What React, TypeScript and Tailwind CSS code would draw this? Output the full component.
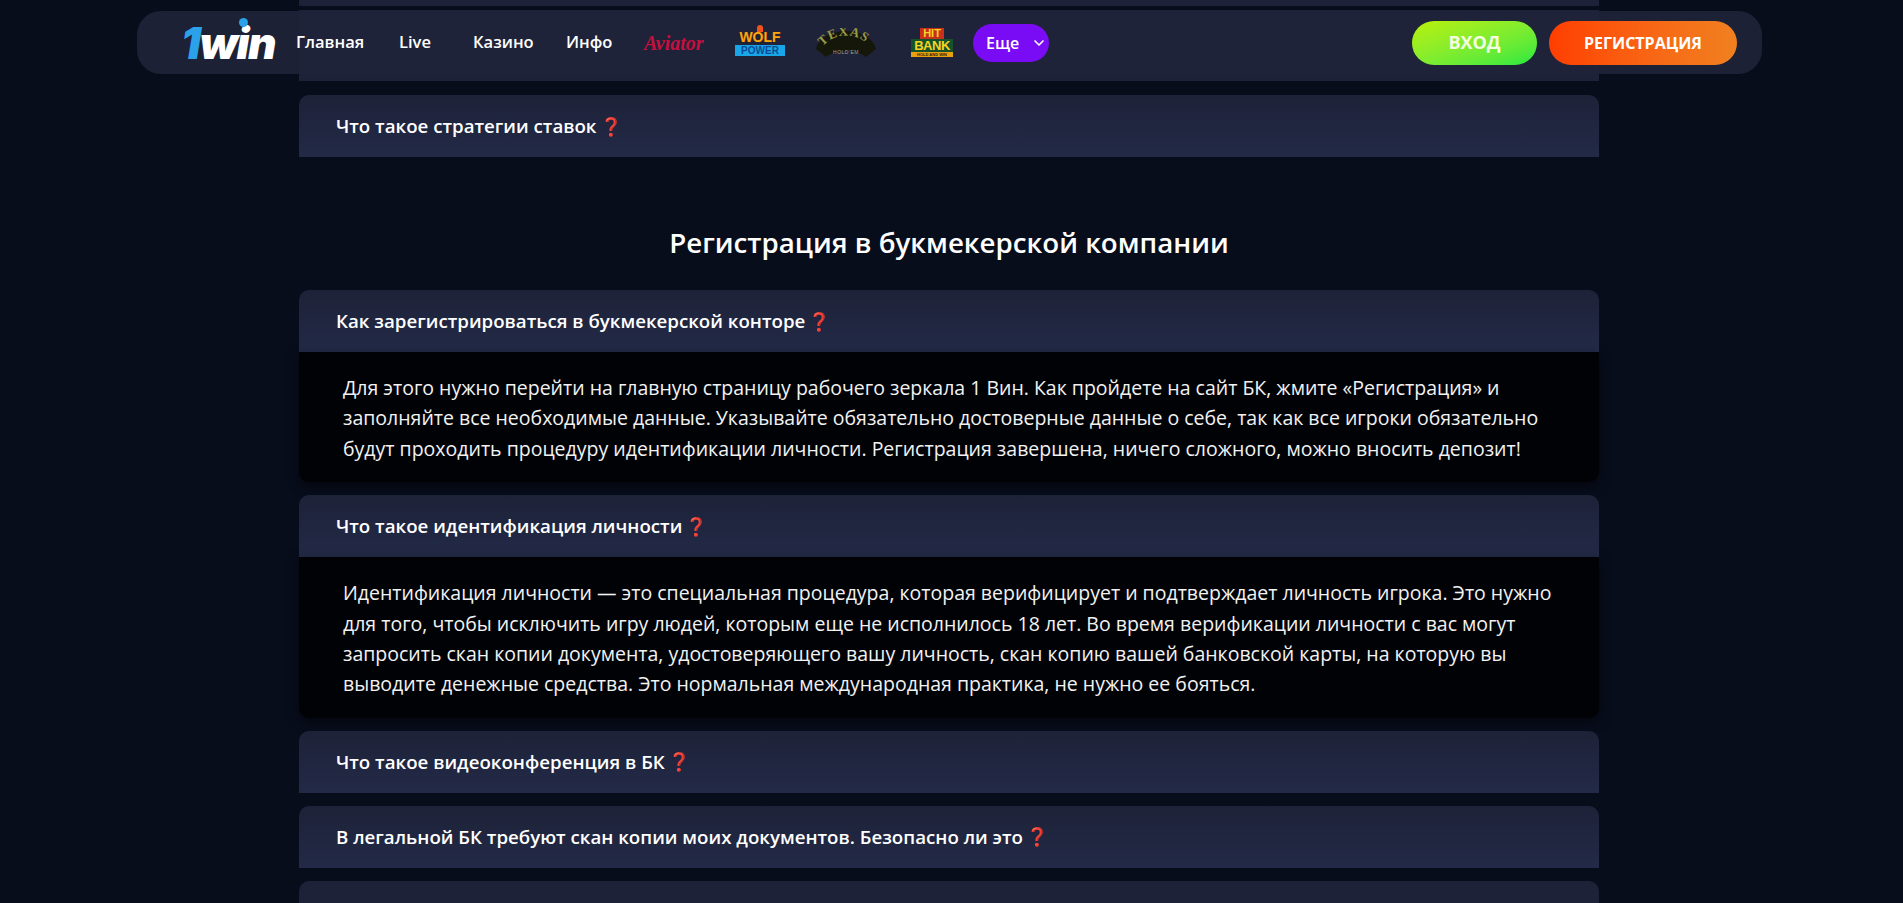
import React from 'react';
import { ChevronDown } from 'lucide-react';

const navLinks = [
  { label: 'Главная', className: 'w-[68px] mr-[35px]' },
  { label: 'Live', className: 'w-[36px] mr-[38px]' },
  { label: 'Казино', className: 'w-[60px] mr-[33px]' },
  { label: 'Инфо', className: 'w-[46px] mr-[32px]' },
];

function Question({ text }: { text: string }) {
  return (
    <div className="h-[62px] rounded-t-[10px] bg-gradient-to-b from-[#1d2238] to-[#232a47] pl-[37px] flex items-center text-[18.7px] font-semibold text-white">
      <span>{text}</span>
      <span className="ml-[3px] text-[#e8204a] text-[18px] font-bold">❓</span>
    </div>
  );
}

function Answer({ children }: { children: React.ReactNode }) {
  return (
    <div className="rounded-b-[10px] bg-[#010206] shadow-[0_4px_12px_rgba(0,0,0,0.55)] pl-[44px] pr-[40px] pt-[21px] pb-[18px] text-[19.5px] leading-[30.4px] text-[#f2f2f2]">
      {children}
    </div>
  );
}

function GameLogos() {
  return (
    <div className="flex items-center">
      <span className="w-[68px] mr-[23px] whitespace-nowrap text-[20px] leading-[24px] italic font-bold text-[#c4103e] font-['Liberation_Serif',serif]">Aviator</span>
      <div className="relative w-[50px] mr-[31px] flex flex-col items-center leading-none font-['Liberation_Sans',sans-serif] font-black">
        <span className="absolute top-[-5px] left-[22px] w-[6px] h-[7px] rounded-t-full bg-[#f0521a]" />
        <span className="text-[14px] text-[#f7a80f] [text-shadow:0_0_1px_#7a1d05]">WOLF</span>
        <span className="w-full h-[11px] mt-[1px] text-center text-[10px] leading-[11px] bg-[#19a6e8] text-[#0c4a96]">POWER</span>
      </div>
      <svg viewBox="0 0 60 30" className="w-[60px] h-[30px] mr-[35px]">
        <path d="M0 21C6 -3 54 -3 60 21L50 29C40 21 20 21 10 29Z" fill="#15170b" />
        <path id="texas-arc" d="M5 21C16 3 44 3 55 21" fill="none" />
        <text fontSize="13" fill="#9a9a42" fontFamily="Liberation Serif, serif" fontWeight="700" letterSpacing="1">
          <textPath href="#texas-arc" startOffset="3">TEXAS</textPath>
        </text>
        <text x="30" y="26" textAnchor="middle" fontSize="5" fill="#a0a08c" fontFamily="Liberation Sans, sans-serif" letterSpacing="0.5">HOLD'EM</text>
      </svg>
      <div className="w-[42px] mr-[22px] flex flex-col items-center leading-none font-['Liberation_Sans',sans-serif] font-black">
        <span className="h-[11px] px-[3px] text-[11px] leading-[11px] text-[#f7d323] bg-[#c9301c]">HIT</span>
        <span className="w-full h-[13px] text-center text-[13px] leading-[13px] tracking-[-0.5px] text-[#f7d323] bg-[#14532a]">BANK</span>
        <span className="w-full h-[5px] text-center text-[4px] leading-[5px] text-[#3a1c00] bg-[#e8a010]">HOLD AND WIN</span>
      </div>
    </div>
  );
}

function Header() {
  return (
    <header className="absolute top-[11px] left-[137px] w-[1625px] h-[63px] rounded-[24px] bg-[#20243a]/90 flex items-center pl-[44px] pr-[25px]">
      <div className="relative w-[115px] flex items-center italic font-black text-[44px] leading-none tracking-[-1.5px] font-['Inter',sans-serif]">
        <span className="text-[#2aa1e8]">1</span>
        <span className="text-white">win</span>
        <span className="absolute left-[58px] top-[-3px] w-[9px] h-[9px] rounded-full bg-[#2aa1e8]" />
      </div>
      <nav className="flex items-center text-[16.5px] font-semibold text-white">
        {navLinks.map((link) => (
          <a key={link.label} className={link.className}>{link.label}</a>
        ))}
      </nav>
      <GameLogos />
      <button className="w-[76px] h-[38px] -ml-[2px] rounded-full bg-[#7a0cf5] flex items-center pl-[13px] text-[16px] font-semibold text-white">
        Еще
        <ChevronDown className="w-[16px] h-[16px] ml-[12px]" strokeWidth={2.5} />
      </button>
      <button className="ml-auto w-[125px] h-[44px] rounded-full bg-gradient-to-br from-[#b8f000] to-[#10e840] text-[18px] font-bold text-[#f4ffe0]">
        ВХОД
      </button>
      <button className="ml-[12px] w-[188px] h-[44px] rounded-full bg-gradient-to-r from-[#ff3d00] to-[#f08020] text-[16px] font-bold text-white">
        РЕГИСТРАЦИЯ
      </button>
    </header>
  );
}

export default function App() {
  return (
    <div className="relative h-[903px] overflow-hidden bg-[#080d1c] font-['Open_Sans','Noto_Sans',sans-serif]">
      <Header />
      <main className="w-[1300px] ml-[299px] flex flex-col">
        <div className="h-[6px] bg-[#1d2238]" />
        <div className="h-[71px] mt-[4px] bg-[#1d2238]" />
        <div className="mt-[14px]">
          <Question text="Что такое стратегии ставок" />
        </div>
        <h2 className="mt-[65px] mb-[28px] text-center text-[27.7px] leading-[40px] font-semibold text-white">
          Регистрация в букмекерской компании
        </h2>
        <Question text="Как зарегистрироваться в букмекерской конторе" />
        <Answer>
          Для этого нужно перейти на главную страницу рабочего зеркала 1 Вин. Как пройдете на сайт БК, жмите «Регистрация» и заполняйте все необходимые данные. Указывайте обязательно достоверные данные о себе, так как все игроки обязательно будут проходить процедуру идентификации личности. Регистрация завершена, ничего сложного, можно вносить депозит!
        </Answer>
        <div className="mt-[13px]">
          <Question text="Что такое идентификация личности" />
        </div>
        <Answer>
          Идентификация личности — это специальная процедура, которая верифицирует и подтверждает личность игрока. Это нужно для того, чтобы исключить игру людей, которым еще не исполнилось 18 лет. Во время верификации личности с вас могут запросить скан копии документа, удостоверяющего вашу личность, скан копию вашей банковской карты, на которую вы выводите денежные средства. Это нормальная международная практика, не нужно ее бояться.
        </Answer>
        <div className="mt-[13px]">
          <Question text="Что такое видеоконференция в БК" />
        </div>
        <div className="mt-[13px]">
          <Question text="В легальной БК требуют скан копии моих документов. Безопасно ли это" />
        </div>
        <div className="mt-[13px] h-[62px] rounded-t-[10px] bg-[#1d2238]" />
      </main>
    </div>
  );
}
